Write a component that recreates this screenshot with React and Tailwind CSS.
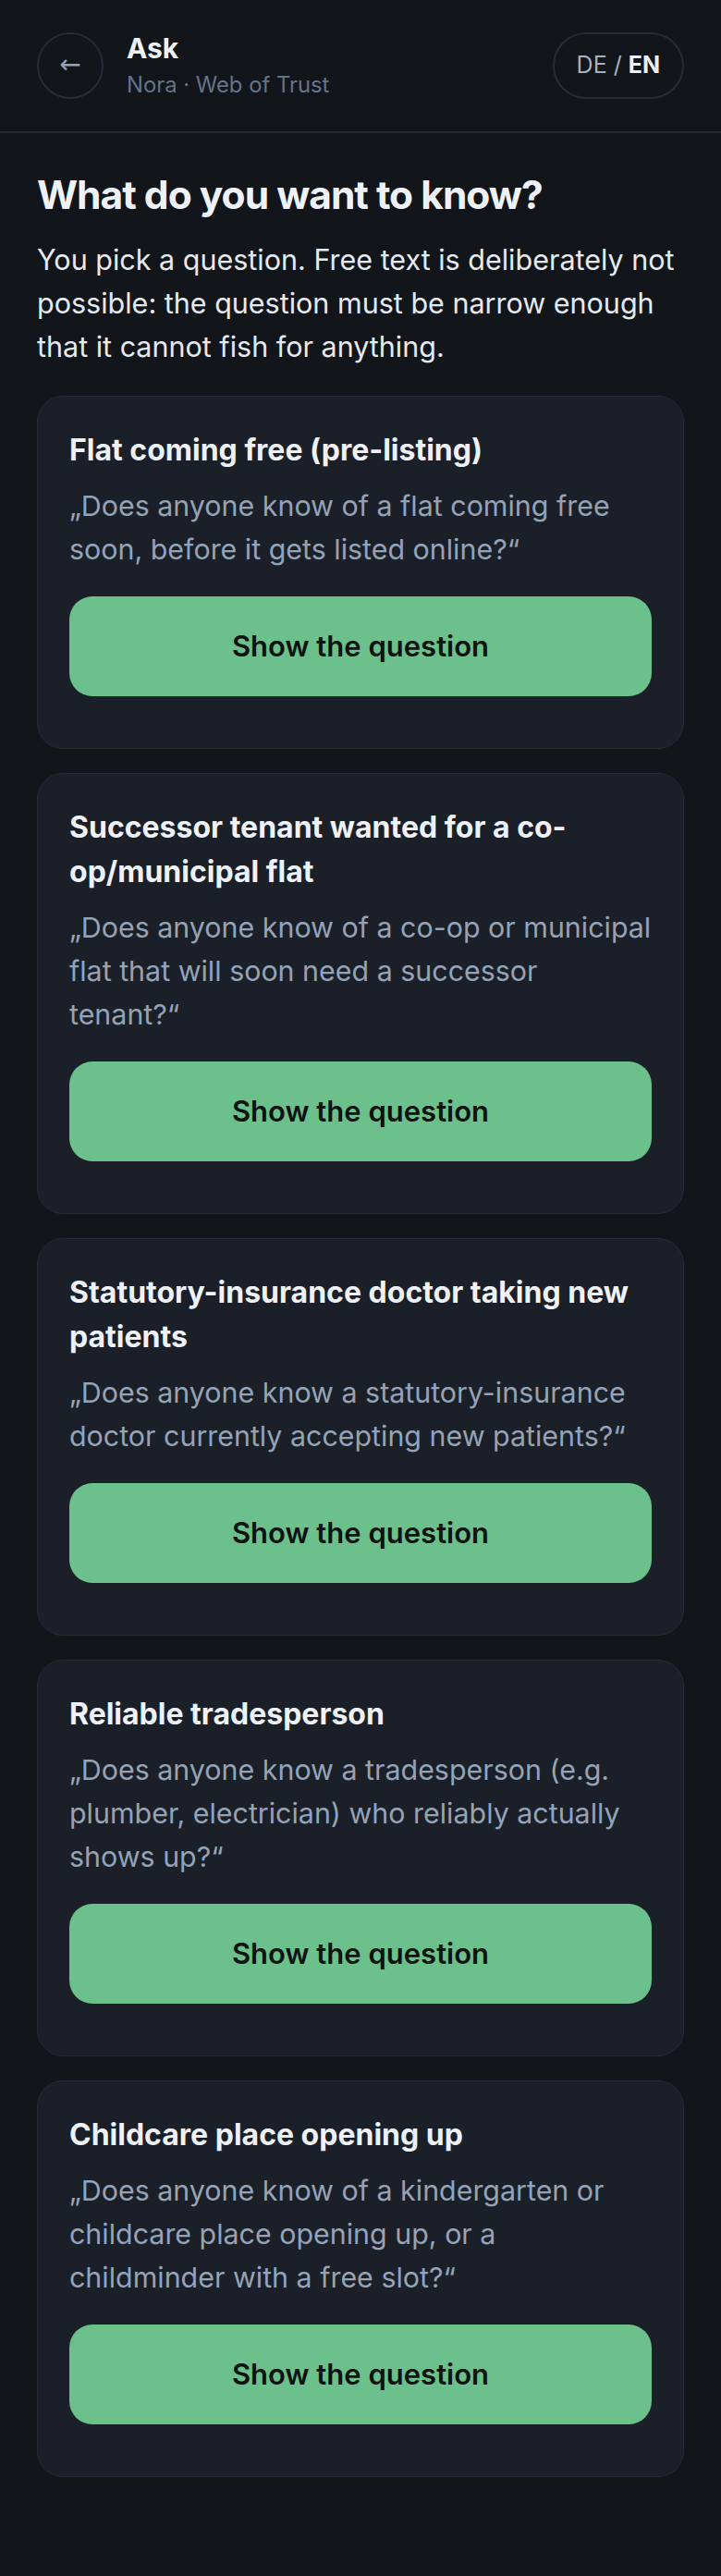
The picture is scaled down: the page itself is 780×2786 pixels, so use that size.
import React from "react";

const items = [
  {
    title: "Flat coming free (pre-listing)",
    quote: "„Does anyone know of a flat coming free soon, before it gets listed online?“",
  },
  {
    title: "Successor tenant wanted for a co-op/municipal flat",
    quote: "„Does anyone know of a co-op or municipal flat that will soon need a successor tenant?“",
  },
  {
    title: "Statutory-insurance doctor taking new patients",
    quote: "„Does anyone know a statutory-insurance doctor currently accepting new patients?“",
  },
  {
    title: "Reliable tradesperson",
    quote: "„Does anyone know a tradesperson (e.g. plumber, electrician) who reliably actually shows up?“",
  },
  {
    title: "Childcare place opening up",
    quote: "„Does anyone know of a kindergarten or childcare place opening up, or a childminder with a free slot?“",
  },
];

function Card({ title, quote }) {
  return (
    <div className="rounded-[28px] border border-[#262c36] bg-[#1b1f27] px-[34px] pt-[34px] pb-[56px]">
      <h2 className="text-[32px] leading-[48px] font-bold text-[#eef1f7]">{title}</h2>
      <p className="mt-[13px] text-[30.4px] leading-[47px] text-[#94a3b8]">{quote}</p>
      <button className="mt-[27px] flex h-[108px] w-full items-center justify-center rounded-[25px] bg-[#6cc08b] text-[31px] font-semibold text-[#0d1310]">
        Show the question
      </button>
    </div>
  );
}

export default function App() {
  return (
    <div className="min-h-[2786px] bg-[#121519] font-['Inter','Noto_Sans',sans-serif]">
      <header className="flex items-center justify-between border-b-2 border-[#222932] px-[40px] py-[34px]">
        <div className="flex items-center gap-[25px]">
          <div className="flex h-[72px] w-[72px] items-center justify-center rounded-full border-2 border-[#262d38] pb-[2px] font-['DejaVu_Sans',sans-serif] text-[28px] text-[#94a3b8]">
            ←
          </div>
          <div className="flex flex-col">
            <div className="text-[30px] leading-[36px] font-bold text-[#eef1f7]">Ask</div>
            <div className="mt-[6px] text-[23.8px] leading-[32px] text-[#64748b]">Nora · Web of Trust</div>
          </div>
        </div>
        <div className="flex h-[72px] items-center rounded-full border-2 border-[#262d38] px-[24px] text-[25px] text-[#a3b1c2]">
          <span>DE /&nbsp;</span>
          <span className="font-bold text-[#eef1f7]">EN</span>
        </div>
      </header>
      <main className="px-[40px] pt-[40px] pb-[106px]">
        <h1 className="text-[42.5px] leading-[53px] font-bold tracking-[-1px] text-[#eef1f7]">
          What do you want to know?
        </h1>
        <p className="mt-[20px] text-[30.5px] leading-[47px] text-[#e5e9f0]">
          You pick a question. Free text is deliberately not possible: the question must be narrow enough that it cannot fish for anything.
        </p>
        <div className="mt-[30px] flex flex-col gap-[26px]">
          {items.map((it) => (
            <Card key={it.title} {...it} />
          ))}
        </div>
      </main>
    </div>
  );
}
